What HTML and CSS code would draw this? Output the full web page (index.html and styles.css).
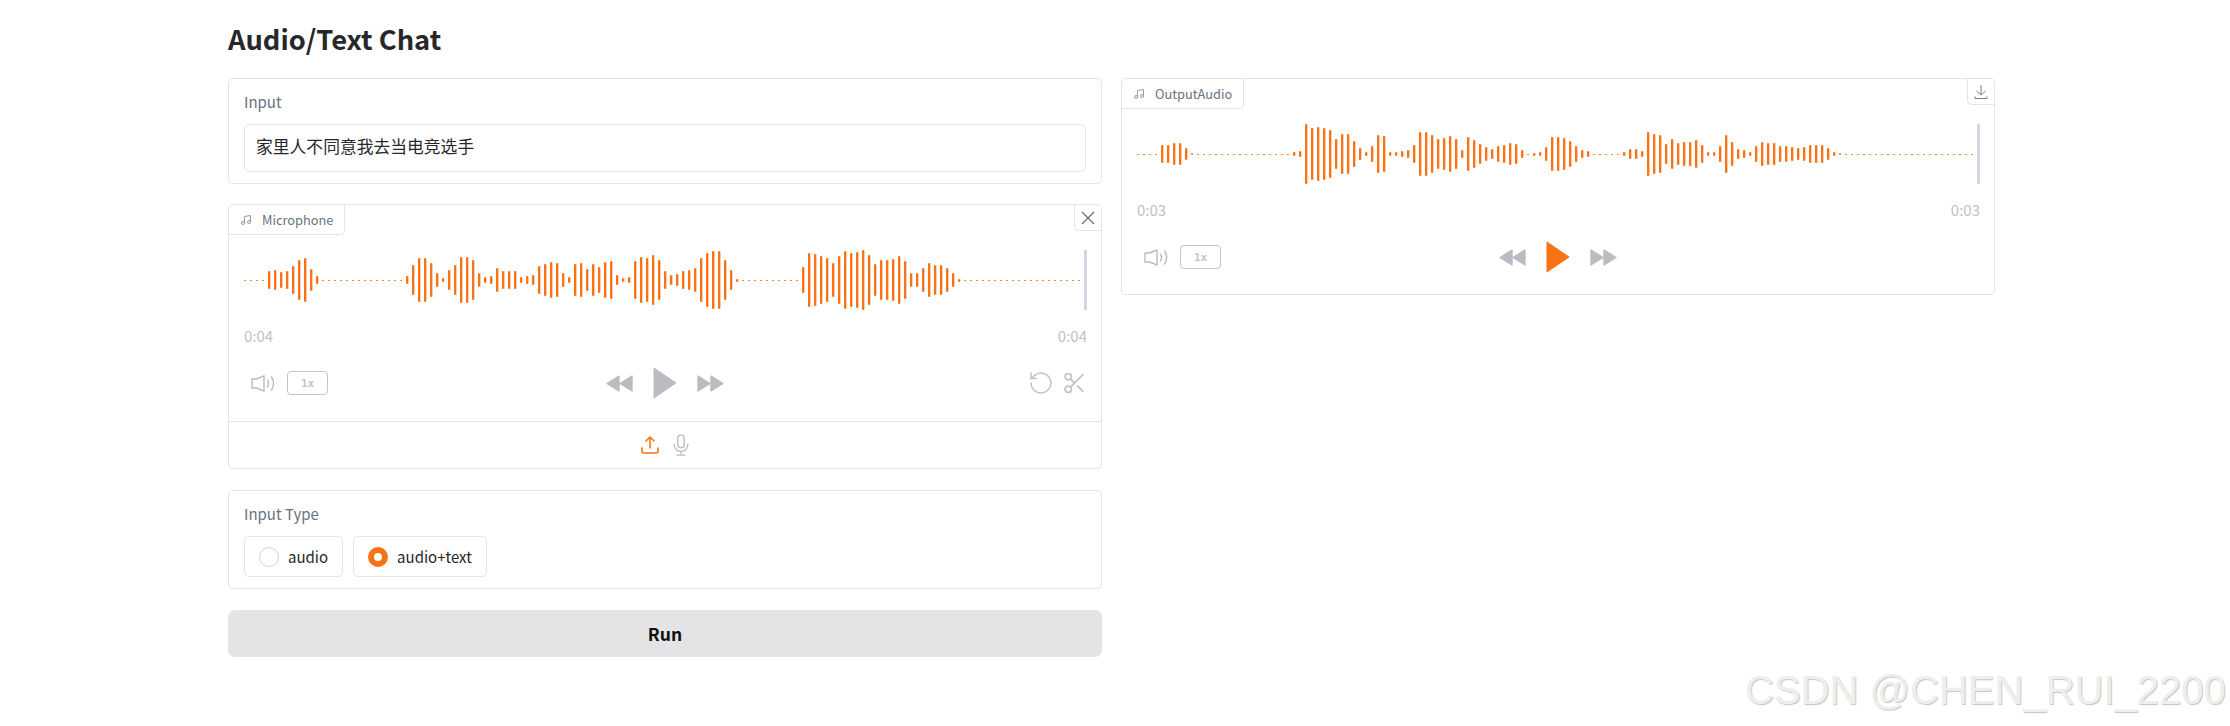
FILE: index.html
```html
<!DOCTYPE html>
<html lang="zh-CN">

<head>
  <meta charset="UTF-8">
  <title>Audio/Text Chat</title>
  <link rel="stylesheet" href="styles.css">
</head>

<body>
  <div class="page">
    <h1 class="page-title">Audio/Text Chat</h1>

    <div class="columns">
      <!-- Left column -->
      <div class="column">
        <div class="panel input-panel">
          <div class="field-label">Input</div>
          <div class="text-box">家里人不同意我去当电竞选手</div>
        </div>

        <div class="panel audio-panel">
          <div class="audio-head">
            <div class="tab">
              <svg class="note-icon" viewBox="0 0 24 24"><path d="M9 18V5l12-2v13"/><circle cx="6" cy="18" r="3"/><circle cx="18" cy="16" r="3"/></svg>
              <span>Microphone</span>
            </div>
            <button class="corner-btn close-btn">
              <svg viewBox="0 0 14 14"><path d="M1 1l12 12M13 1L1 13"/></svg>
            </button>
          </div>
          <div class="wave" id="mic-wave">
            <div class="wave-track"></div>
            <div class="wave-cursor"></div>
          </div>
          <div class="time-row"><span>0:04</span><span>0:04</span></div>
          <div class="controls">
            <div class="controls-left">
              <svg class="speaker" viewBox="0 0 24 17"><path d="M1 4h4.500L13 .8v15.400L5.500 13H1z"/><path d="M16.500 5c1.300 2.200 1.300 4.800 0 7M20.500 2c2.600 4 2.600 9 0 13"/></svg>
              <button class="rate-btn">1x</button>
            </div>
            <div class="controls-mid">
              <svg class="skip" viewBox="0 0 27 17"><path d="M13 1v15L1 8.500zM26 1v15L14 8.500z"/></svg>
              <svg class="play" viewBox="0 0 24 32"><path d="M1 1l22 15L1 31z"/></svg>
              <svg class="skip" viewBox="0 0 27 17"><path d="M1 1v15l12-7.500zM14 1v15l12-7.500z"/></svg>
            </div>
            <div class="controls-right">
              <svg class="undo" viewBox="2 2 20 20"><path d="M3 12a9 9 0 1 0 3-6.700L3 8"/><path d="M3 3v5h5"/></svg>
              <svg class="scissors" viewBox="2 2.500 19 19"><circle cx="6" cy="6" r="3"/><circle cx="6" cy="18" r="3"/><path d="M8.120 8.120 12 12M20 4 8.120 15.880M14.800 14.800 20 20"/></svg>
            </div>
          </div>
          <div class="source-row">
            <svg class="upload" viewBox="0 0 18 18"><path d="M1 12v3a2 2 0 0 0 2 2h12a2 2 0 0 0 2-2v-3"/><path d="M5 5l4-4 4 4M9 1v11"/></svg>
            <svg class="mic" viewBox="0 0 24 24"><rect x="8.500" y="1" width="7" height="14" rx="3.500"/><path d="M4.500 10.500v1a7.500 7.500 0 0 0 15 0v-1M12 19v4M7 23h10"/></svg>
          </div>
        </div>

        <div class="panel type-panel">
          <div class="field-label">Input Type</div>
          <div class="radio-row">
            <label class="radio-item"><span class="radio"></span>audio</label>
            <label class="radio-item"><span class="radio checked"></span>audio+text</label>
          </div>
        </div>

        <button class="run-btn">Run</button>
      </div>

      <!-- Right column -->
      <div class="column">
        <div class="panel audio-panel output-panel">
          <div class="audio-head">
            <div class="tab">
              <svg class="note-icon" viewBox="0 0 24 24"><path d="M9 18V5l12-2v13"/><circle cx="6" cy="18" r="3"/><circle cx="18" cy="16" r="3"/></svg>
              <span>OutputAudio</span>
            </div>
            <button class="corner-btn download-btn">
              <svg viewBox="0 0 14 16"><path d="M7 1v10M2.500 7 7 11l4.500-4M1 12.500v2h12v-2"/></svg>
            </button>
          </div>
          <div class="wave" id="output-wave">
            <div class="wave-track"></div>
            <div class="wave-cursor"></div>
          </div>
          <div class="time-row"><span>0:03</span><span>0:03</span></div>
          <div class="controls">
            <div class="controls-left">
              <svg class="speaker" viewBox="0 0 24 17"><path d="M1 4h4.500L13 .8v15.400L5.500 13H1z"/><path d="M16.500 5c1.300 2.200 1.300 4.800 0 7M20.500 2c2.600 4 2.600 9 0 13"/></svg>
              <button class="rate-btn">1x</button>
            </div>
            <div class="controls-mid">
              <svg class="skip" viewBox="0 0 27 17"><path d="M13 1v15L1 8.500zM26 1v15L14 8.500z"/></svg>
              <svg class="play active" viewBox="0 0 24 32"><path d="M1 1l22 15L1 31z"/></svg>
              <svg class="skip" viewBox="0 0 27 17"><path d="M1 1v15l12-7.500zM14 1v15l12-7.500z"/></svg>
            </div>
            <div class="controls-right"></div>
          </div>
        </div>
      </div>
    </div>
  </div>

  <div class="watermark">CSDN @CHEN_RUI_2200</div>

  <script src="script.js"></script>
</body>

</html>
```

FILE: styles.css
```css
* {
  box-sizing: border-box;
}

html, body {
  margin: 0;
  height: 100%;
  background: white;
  overflow: hidden;
  font-family: "Noto Sans CJK SC", "Noto Sans", sans-serif;
  color: #27272a;
}

.page {
  width: 1767px;
  margin-left: 228px;
}

.page-title {
  margin: 0;
  height: 78px;
  padding-top: 21px;
  font-size: 27.300px;
  line-height: 35px;
  font-weight: 600;
}

.columns {
  display: grid;
  grid-template-columns: 874px 874px;
  column-gap: 19px;
  align-items: start;
}

.column {
  display: flex;
  flex-direction: column;
}

.panel {
  border: 1px solid #e4e4e7;
  border-radius: 5px;
  background: white;
}

.field-label {
  font-size: 15px;
  line-height: 20px;
  color: #6b7280;
}

/* Input */
.input-panel {
  height: 106px;
  padding: 13px 15px 0;
  margin-bottom: 20px;
}

.text-box {
  height: 48px;
  margin-top: 12px;
  padding: 0 11px;
  border: 1px solid #e4e4e7;
  border-radius: 5px;
  font-size: 16.800px;
  line-height: 42px;
}

/* Audio */
.audio-panel {
  height: 265px;
  margin-bottom: 21px;
  overflow: hidden;
}

.output-panel {
  height: 217px;
  margin-bottom: 0;
}

.audio-head {
  display: flex;
  justify-content: space-between;
  align-items: flex-start;
  height: 30px;
}

.tab {
  display: flex;
  align-items: center;
  gap: 10px;
  height: 30px;
  padding: 0 11px;
  border-right: 1px solid #e4e4e7;
  border-bottom: 1px solid #e4e4e7;
  border-bottom-right-radius: 5px;
  font-size: 12.800px;
  color: #6b7280;
}

.note-icon {
  width: 12px;
  height: 12px;
  fill: none;
  stroke: #9a9ba2;
  stroke-width: 2;
}

.corner-btn {
  display: flex;
  justify-content: center;
  align-items: center;
  padding: 0;
  background: white;
  border: 0;
  border-left: 1px solid #e4e4e7;
  border-bottom: 1px solid #e4e4e7;
  border-bottom-left-radius: 5px;
}

.corner-btn svg {
  fill: none;
  stroke: #6b6b73;
  stroke-width: 1.200;
}

.close-btn {
  width: 27px;
  height: 26px;
}

.close-btn svg {
  width: 14px;
  height: 14px;
}

.download-btn {
  width: 27px;
  height: 26px;
}

.download-btn svg {
  width: 14px;
  height: 16px;
  stroke: #7b7b83;
  stroke-width: 1;
}

.wave {
  display: flex;
  align-items: center;
  gap: 4px;
  height: 60px;
  margin-top: 15px;
  padding-left: 15px;
}

.wave-track {
  display: flex;
  justify-content: space-between;
  align-items: center;
  width: 836px;
  height: 100%;
}

.wave-bar {
  width: 2px;
  background: #f97316;
  border-radius: 1px;
  box-shadow: 1px 0 0 rgba(249, 115, 22, 0.35);
}

.wave-bar.dot {
  box-shadow: none;
}

.wave-cursor {
  width: 3px;
  height: 60px;
  background: #d6d3e8;
}

.time-row {
  display: flex;
  justify-content: space-between;
  margin-top: 16px;
  padding: 0 14px 0 15px;
  font-size: 15px;
  line-height: 20px;
  color: #bfc1c8;
}

.controls {
  display: grid;
  grid-template-columns: 1fr auto 1fr;
  align-items: center;
  height: 32px;
  margin-top: 21px;
  padding: 0 17px;
}

.controls-left {
  display: flex;
  align-items: center;
  gap: 12px;
  margin-left: 5px;
}

.controls-mid {
  display: flex;
  align-items: center;
  gap: 20px;
}

.controls-right {
  display: flex;
  justify-content: flex-end;
  align-items: center;
  gap: 12px;
}

.speaker {
  width: 24px;
  height: 17px;
  fill: none;
  stroke: #b9bac0;
  stroke-width: 1.400;
  stroke-linejoin: round;
  stroke-linecap: round;
}

.rate-btn {
  width: 41px;
  height: 24px;
  padding: 0;
  background: white;
  border: 1px solid #c3c4c9;
  border-radius: 4px;
  font-family: "DejaVu Sans Mono", monospace;
  font-size: 11px;
  font-weight: 700;
  color: #c3c4c9;
}

.skip {
  width: 27px;
  height: 17px;
  fill: #bbbcc2;
  stroke: #bbbcc2;
  stroke-width: 1.400;
  stroke-linejoin: round;
}

.play {
  width: 24px;
  height: 32px;
  fill: #bbbcc2;
  stroke: #bbbcc2;
  stroke-width: 1;
  stroke-linejoin: round;
}

.play.active {
  fill: #f97316;
  stroke: #f97316;
}

.undo {
  width: 22px;
  height: 22px;
  fill: none;
  stroke: #c3c4c9;
  stroke-width: 1.400;
  stroke-linecap: round;
  stroke-linejoin: round;
}

.scissors {
  width: 20px;
  height: 20px;
  fill: none;
  stroke: #c3c4c9;
  stroke-width: 1.700;
  stroke-linecap: round;
}

.source-row {
  display: flex;
  justify-content: center;
  align-items: center;
  gap: 11px;
  height: 47px;
  margin-top: 22px;
  padding-left: 2px;
  border-top: 1px solid #e4e4e7;
}

.upload {
  width: 18px;
  height: 18px;
  fill: none;
  stroke: #f97316;
  stroke-width: 1.600;
  stroke-linecap: round;
  stroke-linejoin: round;
}

.mic {
  width: 22px;
  height: 22px;
  fill: none;
  stroke: #bdbec4;
  stroke-width: 1.500;
}

/* Input type */
.type-panel {
  height: 99px;
  padding: 13px 15px 0;
  margin-bottom: 21px;
}

.radio-row {
  display: flex;
  gap: 10px;
  margin-top: 12px;
}

.radio-item {
  display: flex;
  align-items: center;
  gap: 9px;
  height: 41px;
  padding: 0 14px;
  border: 1px solid #e4e4e7;
  border-radius: 5px;
  font-size: 15px;
}

.radio {
  width: 20px;
  height: 20px;
  border: 1px solid #d4d4d8;
  border-radius: 50%;
}

.radio.checked {
  border: 6px solid #f97316;
}

.run-btn {
  height: 47px;
  padding: 0;
  background: #e4e4e7;
  border: 0;
  border-radius: 7px;
  font-family: inherit;
  font-size: 17.500px;
  font-weight: 600;
  color: #111;
}

/* Watermark */
.watermark {
  position: absolute;
  top: 665px;
  left: 1745px;
  font-family: "Liberation Sans", sans-serif;
  font-size: 40px;
  line-height: 50px;
  color: #eeeeee;
  text-shadow: 1px 1px 1px #c4c4c4;
  white-space: nowrap;
}
```

FILE: script.js
```js
// bar heights in px, 0 = the thin dotted line
const dots = (n) => new Array(n).fill(0);

const micBars = [
  ...dots(4),
  18, 20, 16, 18, 28, 40, 44, 22, 8,
  ...dots(14),
  8, 30, 44, 44, 34, 14, 4, 20, 30, 46, 46, 40,
  14, 6, 8, 24, 18, 18, 18, 6, 8, 10, 28, 32, 36, 34, 14, 6, 32, 34, 22, 32,
  26, 36, 38, 10, 4, 6, 38, 46, 44, 50, 40, 18, 10, 12, 18, 20, 24, 44, 54, 58,
  58, 40, 20, 3,
  ...dots(10),
  26, 54, 52, 48, 44, 34, 48, 58, 54, 56, 60, 50, 32, 40, 40, 42, 48, 38, 14, 14,
  24, 34, 30, 30, 24, 14, 3,
  ...dots(20)
];

const outputBars = [
  ...dots(4),
  18, 18, 22, 22, 12, 2,
  ...dots(16),
  4, 6, 60, 52, 54, 52, 48, 30, 40, 40, 26, 12, 4, 16, 38, 36, 4, 4, 6, 8, 18,
  44, 44, 38, 30, 32, 36, 30, 8, 34, 28, 20, 14, 10, 16, 18, 22, 20, 8,
  0,
  3, 4, 14, 34, 34, 32, 26, 16, 8, 6,
  ...dots(5),
  4, 10, 10, 6, 44, 40, 38, 20, 30, 22, 24, 24, 28, 18, 4, 4, 16, 38, 24, 10, 8,
  4, 16, 24, 22, 22, 16, 16, 14, 12, 14, 18, 18, 18, 12, 4, 2,
  ...dots(22)
];

function drawWave(id, bars) {
  const track = document.querySelector('#' + id + ' .wave-track');
  bars.forEach((h) => {
    const bar = document.createElement('div');
    bar.classList.add('wave-bar');
    if (h < 3) bar.classList.add('dot');
    bar.style.height = (h || 1) + 'px';
    track.appendChild(bar);
  });
}

drawWave('mic-wave', micBars);
drawWave('output-wave', outputBars);
```
